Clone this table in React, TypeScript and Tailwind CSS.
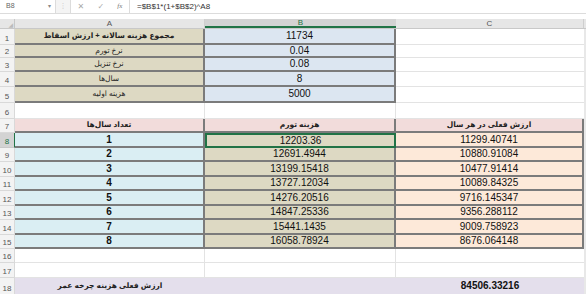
import React from "react"

const dark = "border-[#7b7b7b]"

type Cell = { text?: string; cls: string; bold?: boolean }
type Row = { n: number; h: number; a: Cell; b: Cell; c: Cell; sel?: boolean }

const tanTop = "bg-[#ddd9c3] border-b-2 border-r-2 " + dark
const blueTop = "bg-[#dce6f1] border-b-2 border-r-2 " + dark
const plainC = "bg-white border-b border-[#e3e3e3]"
const plainAB = "bg-white border-b border-r border-[#e3e3e3]"
const pink = "bg-[#f2dcdb] border-b-2 border-r-2 " + dark
const cyan = "bg-[#daeef3] border-b-2 border-r-2 " + dark
const tan = "bg-[#ddd9c3] border-b-2 border-r-2 " + dark
const peach = "bg-[#fde9d9] border-b-2 border-r-2 " + dark
const lav = "bg-[#e4dfec] border-b border-[#e4dfec]"

const yearly = [
  ["12203.36", "11299.40741"],
  ["12691.4944", "10880.91084"],
  ["13199.15418", "10477.91414"],
  ["13727.12034", "10089.84325"],
  ["14276.20516", "9716.145347"],
  ["14847.25336", "9356.288112"],
  ["15441.1435", "9009.758923"],
  ["16058.78924", "8676.064148"],
]

const rows: Row[] = [
  { n: 1, h: 16, a: { text: "مجموع هزینه سالانه + ارزش اسقاط", cls: tanTop, bold: true }, b: { text: "11734", cls: blueTop }, c: { cls: plainC } },
  { n: 2, h: 13, a: { text: "نرخ تورم", cls: tanTop }, b: { text: "0.04", cls: blueTop }, c: { cls: plainC } },
  { n: 3, h: 14, a: { text: "نرخ تنزیل", cls: tanTop }, b: { text: "0.08", cls: blueTop }, c: { cls: plainC } },
  { n: 4, h: 15, a: { text: "سال‌ها", cls: tanTop }, b: { text: "8", cls: blueTop }, c: { cls: plainC } },
  { n: 5, h: 16, a: { text: "هزینه اولیه", cls: tanTop }, b: { text: "5000", cls: blueTop }, c: { cls: plainC } },
  { n: 6, h: 16, a: { cls: plainAB }, b: { cls: plainAB }, c: { cls: plainC } },
  { n: 7, h: 14, a: { text: "تعداد سال‌ها", cls: pink, bold: true }, b: { text: "هزینه تورم", cls: pink, bold: true }, c: { text: "ارزش فعلی در هر سال", cls: pink, bold: true } },
  ...yearly.map(([b, c], i) => ({
    n: 8 + i,
    h: i % 2 === 0 ? 15 : 14,
    sel: i === 0,
    a: { text: String(i + 1), cls: cyan, bold: true },
    b: { text: b, cls: i === 0 ? "bg-[#ddd9c3] border-2 border-[#217346]" : tan },
    c: { text: c, cls: peach },
  })),
  { n: 16, h: 14, a: { cls: plainAB }, b: { cls: plainAB }, c: { cls: plainC } },
  { n: 17, h: 15, a: { cls: plainAB }, b: { cls: plainAB }, c: { cls: plainC } },
  { n: 18, h: 17, a: { text: "ارزش فعلی هزینه چرخه عمر", cls: lav, bold: true }, b: { cls: lav }, c: { text: "84506.33216", cls: lav, bold: true } },
]

const persian = /[\u0600-\u06FF]/

function CellBox({ cell, w }: { cell: Cell; w: string }) {
  const fa = cell.text ? persian.test(cell.text) : false
  return (
    <div className={`${w} shrink-0 flex items-center justify-center box-border ${cell.cls}`}>
      <span
        dir={fa ? "rtl" : "ltr"}
        className={`leading-none ${fa ? "text-[7.5px] text-[#222]" : "text-[10px] text-[#111]"} ${cell.bold ? "font-bold" : ""}`}
      >
        {cell.text}
      </span>
    </div>
  )
}

export default function App() {
  return (
    <div className="w-[586px] h-[294px] overflow-hidden bg-white" style={{ fontFamily: '"Liberation Sans", "DejaVu Sans", sans-serif' }}>
      {/* formula bar */}
      <div className="h-[14px] flex items-center bg-[#f4f4f4] border-b border-[#dcdcdc] text-[#444]">
        <div className="w-[56px] h-full flex items-center justify-between pl-[6px] pr-1 bg-white border-r border-[#dcdcdc]">
          <span className="text-[7px] text-[#666]">B8</span>
          <span className="text-[6px] text-[#888]">▾</span>
        </div>
        <span className="w-[14px] text-center text-[7px] text-[#bbb]">⋮</span>
        <div className="w-[60px] h-full flex items-center justify-around bg-white border-x border-[#dcdcdc] text-[#aaa]">
          <span className="text-[8px]">✕</span>
          <span className="text-[8px]">✓</span>
          <span className="text-[7px] italic text-[#777]" style={{ fontFamily: '"Liberation Serif", serif' }}>fx</span>
        </div>
        <div className="flex-1 h-full flex items-center pl-[7px] bg-white">
          <span className="text-[8px] text-[#333]">=$B$1*(1+$B$2)^A8</span>
        </div>
      </div>
      <div className="h-[5px] bg-white" />

      {/* column headers */}
      <div className="flex h-[10px] bg-[#e6e6e6] border-b border-[#c8c8c8] text-[8px] text-[#555] leading-none">
        <div className="w-[15px] shrink-0 border-r border-[#c8c8c8] flex items-end justify-end pr-[1px] text-[#bbb] text-[6px]">◢</div>
        <div className="w-[190px] shrink-0 flex items-center justify-center border-r border-[#cfcfcf]">A</div>
        <div className="w-[191px] shrink-0 flex items-center justify-center bg-[#d3d3d3] border-b-2 border-[#217346] text-[#217346]">B</div>
        <div className="w-[188px] shrink-0 flex items-center justify-center border-r border-[#cfcfcf]">C</div>
      </div>

      {rows.map((r) => (
        <div key={r.n} className="flex" style={{ height: r.h }}>
          <div
            className={`w-[15px] shrink-0 flex items-end justify-center pb-[1px] text-[8px] leading-none border-r border-b box-border ${
              r.sel ? "bg-[#d3d3d3] text-[#217346] border-r-[#217346] border-b-[#c8c8c8]" : "bg-[#f3f3f3] text-[#555] border-[#d9d9d9]"
            }`}
          >
            {r.n}
          </div>
          <CellBox cell={r.a} w="w-[190px]" />
          <CellBox cell={r.b} w="w-[191px]" />
          <CellBox cell={r.c} w="w-[188px]" />
          <div className="w-[2px] shrink-0 bg-[#e8e8e8]" />
        </div>
      ))}
    </div>
  )
}
